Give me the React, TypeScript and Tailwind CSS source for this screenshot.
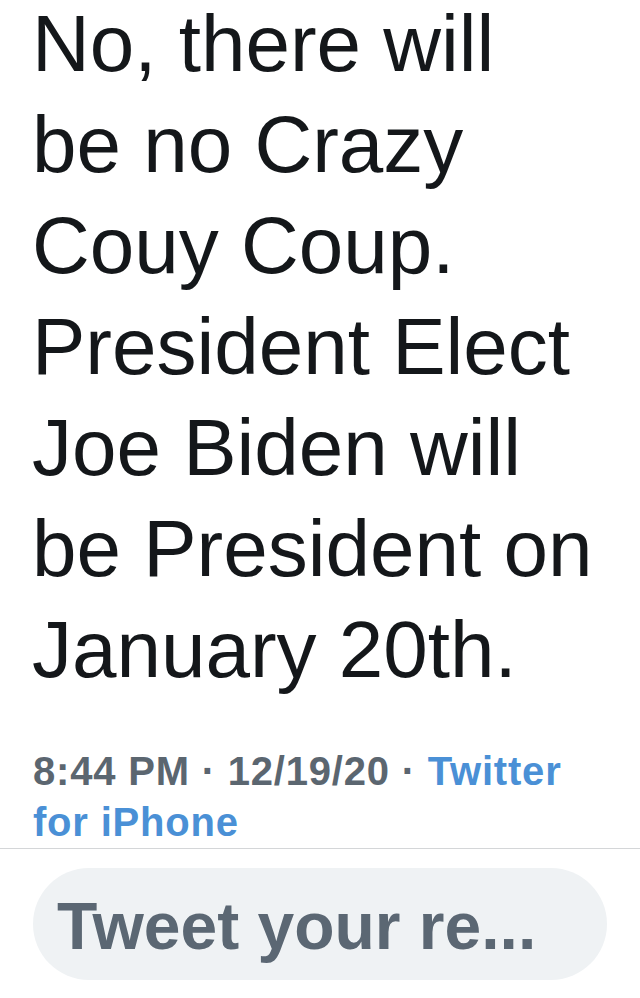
const lines = [
  'No, there will',
  'be no Crazy',
  'Couy Coup.',
  'President Elect',
  'Joe Biden will',
  'be President on',
  'January 20th.',
]

export default function App() {
  return (
    <div className="w-full h-[998px] bg-white overflow-hidden font-['Liberation_Sans',Arial,sans-serif]">
      <div className="px-[32px] -mt-[7px] text-[80px] leading-[101px] text-[#14171a] whitespace-nowrap">
        {lines.map((line) => (
          <div key={line}>{line}</div>
        ))}
      </div>

      <div className="px-[33px] mt-[46px] text-[40px] leading-[51px] tracking-[0.8px] font-bold text-[#5b6670]">
        <div className="whitespace-nowrap">
          8:44 PM · 12/19/20 · <span className="text-[#4a90d6]">Twitter</span>
        </div>
        <div className="text-[#4a90d6]">for iPhone</div>
      </div>

      <div className="border-t border-[#d4d6d8]" />

      <div className="px-[33px] pt-[19px]">
        <div className="h-[112px] rounded-full bg-[#eff2f4] flex items-center pl-[24px]">
          <span className="text-[66px] leading-none pt-[4px] font-bold text-[#5b6773] whitespace-nowrap">
            Tweet your re...
          </span>
        </div>
      </div>
    </div>
  )
}
